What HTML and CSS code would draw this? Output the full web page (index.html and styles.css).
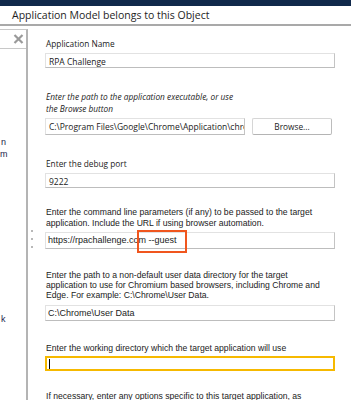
FILE: index.html
```html
<!DOCTYPE html>
<html lang="en">
<head>
    <meta charset="UTF-8">
    <title>Application Model</title>
    <link rel="stylesheet" href="styles.css">
</head>
<body>
    <!-- Window top strip -->
    <div class="top-strip"></div>

    <!-- Dialog title -->
    <div class="title-bar">Application Model belongs to this Object</div>

    <div class="workspace">
        <!-- Collapsed side panel -->
        <div class="side-panel">
            <div class="side-head">
                <svg class="close-icon" width="11" height="10" viewBox="0 0 11 10">
                    <path d="M1.5 1 L9.5 9 M9.5 1 L1.5 9" stroke="#9a9a9a" stroke-width="2.2"/>
                </svg>
            </div>
            <div class="side-body">
                <span class="side-text t1">n</span>
                <span class="side-text t2">m</span>
                <span class="side-text t3">k</span>
            </div>
        </div>

        <!-- Splitter grip -->
        <div class="grip">
            <span></span><span></span><span></span>
        </div>

        <!-- Main form -->
        <div class="form">
            <div class="label seg l-name">Application Name</div>
            <div class="field seg f-name">RPA Challenge</div>

            <div class="label seg italic l-path">Enter the path to the application executable, or use<br>the Browse button</div>
            <div class="row f-path">
                <div class="field seg short">C:\Program Files\Google\Chrome\Application\chrome.exe</div>
                <div class="browse seg">Browse...</div>
            </div>

            <div class="label seg l-port">Enter the debug port</div>
            <div class="field seg f-port">9222</div>

            <div class="label ari l-cmd">Enter the command line parameters (if any) to be passed to the target<br>application. Include the URL if using browser automation.</div>
            <div class="field ari f-cmd">https://rpachallenge.com --guest
                <div class="highlight"></div>
            </div>

            <div class="label ari l-data">Enter the path to a non-default user data directory for the target<br>application to use for Chromium based browsers, including Chrome and<br>Edge. For example: C:\Chrome\User Data.</div>
            <div class="field ari f-data">C:\Chrome\User Data</div>

            <div class="label ari l-work">Enter the working directory which the target application will use</div>
            <div class="field ari focused f-work"><span class="caret"></span></div>

            <div class="label ari l-opts">If necessary, enter any options specific to this target application, as</div>
        </div>
    </div>
</body>
</html>
```

FILE: styles.css
```css
body {
    margin: 0;
    width: 351px;
    height: 400px;
    overflow: hidden;
    background: #fff;
    color: #1b1b1b;
    font-family: 'Open Sans', sans-serif;
}

.top-strip {
    height: 6px;
    background: #10294b;
}

/* Dialog title */
.title-bar {
    height: 18px;
    line-height: 18px;
    padding-left: 12px;
    font-size: 10.5px;
    color: #1e1e1e;
    border-bottom: 2px solid #a9a9a9;
}

.workspace {
    display: flex;
    height: 376px;
    padding-top: 3px;
    box-sizing: border-box;
}

/* Left side panel */
.side-panel {
    width: 26px;
    border-top: 1px solid #c8c8c8;
    border-right: 2px solid #b4b4b4;
    display: flex;
    flex-direction: column;
}

.side-head {
    height: 18px;
    border-bottom: 1px solid #c8c8c8;
    display: flex;
    justify-content: flex-end;
    align-items: center;
    padding-right: 2px;
}

.side-body {
    position: relative;
    flex: 1;
}

.side-text {
    position: absolute;
    font-family: 'Liberation Sans', sans-serif;
    font-size: 9px;
    color: #1c1c4a;
}

.t1 { left: 1px; top: 88px; }
.t2 { left: 0; top: 100px; }
.t3 { left: 1px; top: 265px; }

.grip {
    width: 17px;
    display: flex;
    flex-direction: column;
    gap: 6px;
    padding-top: 201px;
    padding-left: 3px;
    box-sizing: border-box;
}

.grip span {
    width: 2px;
    height: 2px;
    background: #b8b8b8;
}

/* Form */
.form {
    width: 290px;
    display: flex;
    flex-direction: column;
}

.seg {
    font-family: 'Open Sans', sans-serif;
    font-size: 8.3px;
}

.ari {
    font-family: 'Liberation Sans', sans-serif;
    font-size: 8.65px;
}

.italic {
    font-style: italic;
}

.label {
    line-height: 12px;
    padding-left: 1px;
    white-space: nowrap;
}

.field {
    position: relative;
    height: 17px;
    line-height: 15px;
    box-sizing: border-box;
    border: 1px solid #e2e2e2;
    border-right-color: #c4c4c4;
    border-bottom-color: #bdbdbd;
    padding-left: 3px;
    white-space: nowrap;
    overflow: hidden;
}

.field.ari {
    font-size: 9px;
    padding-left: 2px;
}

.field.seg {
    font-size: 8.5px;
}

.row {
    display: flex;
    gap: 7px;
}

.short {
    width: 200px;
}

.browse {
    width: 80px;
    height: 17px;
    line-height: 15px;
    box-sizing: border-box;
    border: 1px solid #d6d6d6;
    border-right-color: #bcbcbc;
    border-bottom-color: #b4b4b4;
    border-radius: 2px;
    text-align: center;
}

.focused {
    border: 2px solid #f6b900;
}

.caret {
    display: inline-block;
    width: 1px;
    height: 10px;
    margin-top: 1px;
    background: #000;
    vertical-align: top;
}

.highlight {
    position: absolute;
    left: 91px;
    top: -3px;
    width: 50px;
    height: 23px;
    box-sizing: border-box;
    border: 2px solid #f0561e;
}

.f-cmd {
    overflow: visible;
}

/* Vertical rhythm */
.l-name { margin-top: 9px; }
.f-name { margin-top: 3px; }
.l-path { margin-top: 23px; }
.f-path { margin-top: 3px; }
.l-port { margin-top: 23px; }
.f-port { margin-top: 3px; }
.l-cmd { margin-top: 19px; line-height: 11px; }
.f-cmd { margin-top: 3px; }
.l-data { margin-top: 21px; line-height: 10px; }
.f-data { margin-top: 5px; }
.l-work { margin-top: 21px; }
.f-work { margin-top: 2px; }
.l-opts { margin-top: 19px; }
```
